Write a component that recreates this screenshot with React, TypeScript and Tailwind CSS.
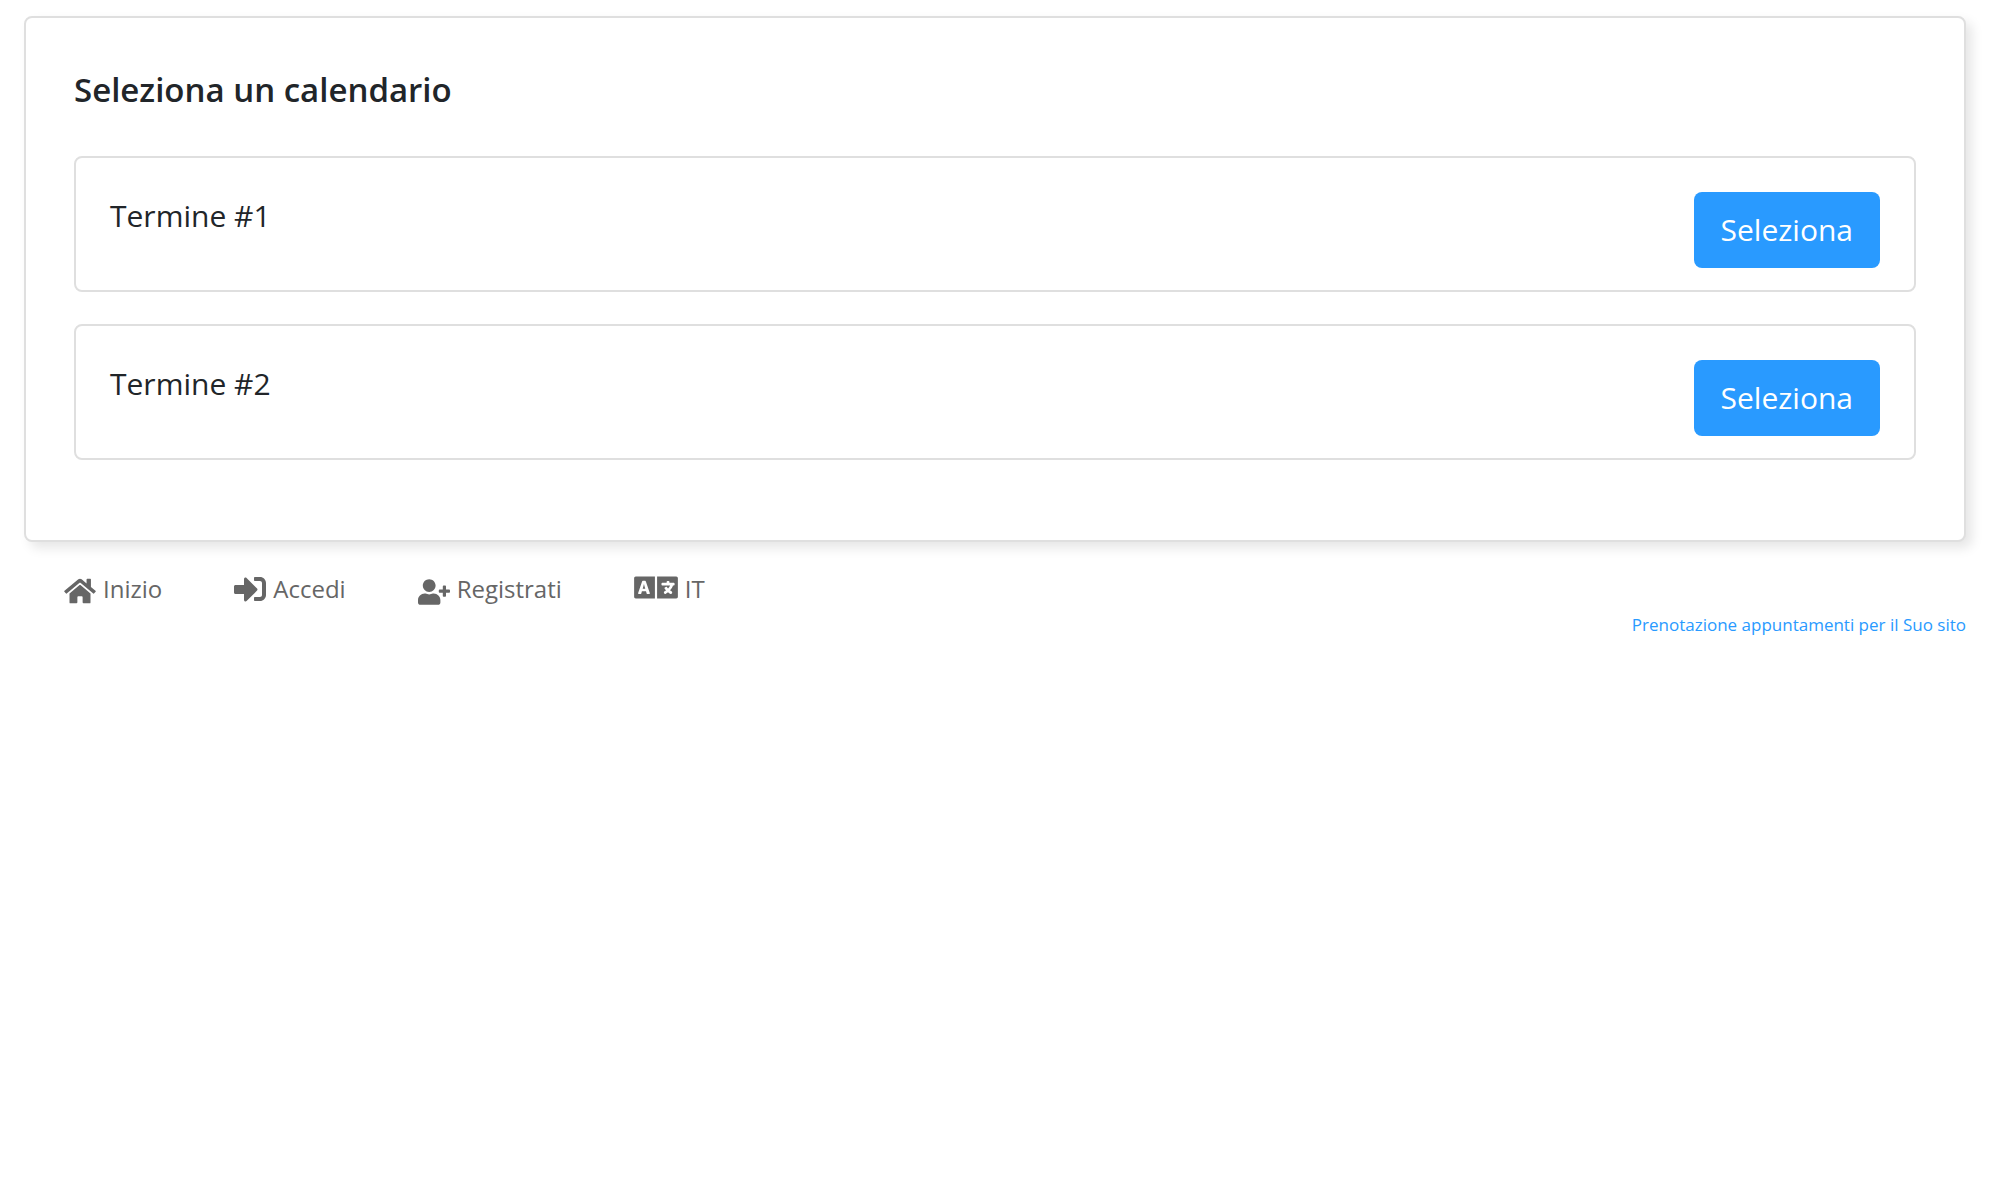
import { FaHome, FaLanguage, FaSignInAlt, FaUserPlus } from "react-icons/fa";

const calendars = ["Termine #1", "Termine #2"];

const links = [
  { label: "Inizio", href: "#inizio", Icon: FaHome, size: "h-7 w-8" },
  { label: "Accedi", href: "#accedi", Icon: FaSignInAlt, size: "h-8 w-8" },
  { label: "Registrati", href: "#registrati", Icon: FaUserPlus, size: "h-[26px] w-8" },
  { label: "IT", href: "#lingua", Icon: FaLanguage, size: "h-[35px] w-11" },
];

export default function App() {
  return (
    <div className="px-6 pt-4 font-['Open_Sans',sans-serif] text-[#212529]">
      <main className="rounded-lg border-2 border-[#dfdfdf] bg-white px-12 pt-12 pb-20 shadow-[6px_6px_12px_rgba(0,0,0,0.1)]">
        <h1 className="text-[33px] leading-[48px] font-semibold">Seleziona un calendario</h1>
        <ul className="mt-[42px] flex flex-col gap-8">
          {calendars.map((name) => (
            <li
              key={name}
              className="flex items-start justify-between rounded-lg border-2 border-[#dfdfdf] px-[34px] pt-[34px] pb-[22px]"
            >
              <h2 className="text-[30px] leading-[48px]">{name}</h2>
              <button
                type="button"
                className="rounded-lg bg-[#299aff] px-[27px] py-[14px] text-[30px] leading-[48px] text-white"
              >
                Seleziona
              </button>
            </li>
          ))}
        </ul>
      </main>
      <nav className="flex flex-wrap items-end gap-x-[72px] px-10 pt-7 text-[24px] leading-8 text-[#666]">
        {links.map(({ label, href, Icon, size }) => (
          <a key={label} href={href} className="flex items-end gap-[7px]">
            <Icon className={size} aria-hidden="true" />
            {label}
          </a>
        ))}
      </nav>
      <footer className="mt-2 text-right text-[17px] leading-6">
        <a href="#prenotazione" className="text-[#299aff]">
          Prenotazione appuntamenti per il Suo sito
        </a>
      </footer>
    </div>
  );
}
